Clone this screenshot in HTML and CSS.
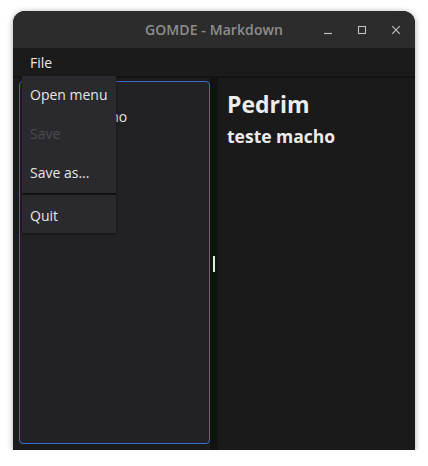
FILE: index.html
```html
<!DOCTYPE html>
<html>
<head>
<meta charset="utf-8">
<link rel="stylesheet" href="styles.css">
</head>
<body>
<div class="window">
  <header class="titlebar">
    <span class="spacer"></span>
    <span class="title">GOMDE - Markdown</span>
    <div class="controls">
      <span class="ctl"><svg width="10" height="10" viewBox="0 0 10 10"><path d="M1 8.5H9" stroke="#bdbdbd" stroke-width="1.2" fill="none"/></svg></span>
      <span class="ctl"><svg width="10" height="10" viewBox="0 0 10 10"><rect x="1.5" y="1.5" width="7" height="7" stroke="#bdbdbd" stroke-width="1.1" fill="none"/></svg></span>
      <span class="ctl"><svg width="10" height="10" viewBox="0 0 10 10"><path d="M1.2 1.2L8.8 8.8M8.8 1.2L1.2 8.8" stroke="#bdbdbd" stroke-width="1.2" fill="none"/></svg></span>
    </div>
  </header>
  <nav class="menubar"><span class="menu-item">File</span></nav>
  <div class="panes">
    <div class="editor-pane">
      <div class="editor">
        <div class="line"># Pedrim</div>
        <div class="line">## teste macho</div>
      </div>
    </div>
    <div class="handle"><span class="grip"></span></div>
    <div class="preview">
      <h1>Pedrim</h1>
      <h2>teste macho</h2>
    </div>
  </div>
  <div class="popup">
    <div class="pitem">Open menu</div>
    <div class="pitem disabled">Save</div>
    <div class="pitem">Save as...</div>
    <div class="sep"></div>
    <div class="pitem last">Quit</div>
  </div>
</div>
</body>
</html>
```
FILE: styles.css
```css
* { box-sizing: border-box; }
html, body { margin: 0; background: #ffffff; }
body {
  padding: 11px 13px 0 13px;
  font-family: "Open Sans", "Noto Sans", sans-serif;
}
.window {
  position: relative;
  width: 402px;
  height: 439px;
  border-radius: 12px 12px 0 0;
  background: #1a1a1a;
  box-shadow: 0 1px 6px rgba(0,0,0,0.35);
  display: flex;
  flex-direction: column;
}
.titlebar {
  height: 37px;
  flex: none;
  background: #2c2c2c;
  border-radius: 12px 12px 0 0;
  display: grid;
  grid-template-columns: 1fr auto 1fr;
  align-items: center;
}
.title {
  color: #8e8e8e;
  font-size: 14px;
  font-weight: 600;
  letter-spacing: 0.1px;
}
.controls {
  justify-self: end;
  display: flex;
  gap: 10px;
  padding-right: 7px;
}
.ctl {
  width: 24px;
  height: 24px;
  display: flex;
  align-items: center;
  justify-content: center;
}
.menubar {
  height: 30px;
  flex: none;
  background: #1b1b1b;
  border-bottom: 2px solid #131313;
  display: flex;
  align-items: center;
  padding-left: 17px;
}
.menu-item {
  color: #e8e8e8;
  font-size: 14px;
  line-height: 18px;
  padding-top: 1px;
}
.panes {
  flex: 1;
  display: flex;
  min-height: 0;
}
.editor-pane {
  width: 197px;
  flex: none;
  background: #1b1b1b;
  padding: 3px 0 6px 6px;
  display: flex;
}
.editor {
  flex: 1;
  border: 1px solid #3a6cd0;
  border-radius: 4px;
  background: #222225;
  padding: 0 5px;
  color: #e2e2e2;
  font-size: 14px;
  line-height: 23px;
}
.handle {
  width: 8px;
  flex: none;
  background: #121212;
  display: flex;
  align-items: center;
  justify-content: center;
  padding-bottom: 1px;
}
.grip {
  width: 2px;
  height: 16px;
  background: #e6e6e6;
}
.preview {
  flex: 1;
  background: #1a1a1a;
  padding: 10px 9px;
  color: #ececec;
}
.preview h1 {
  margin: 0;
  font-size: 23px;
  font-weight: 700;
  line-height: 32px;
}
.preview h2 {
  margin: 4px 0 0 0;
  font-size: 17.5px;
  font-weight: 700;
  line-height: 24px;
}
.popup {
  position: absolute;
  left: 9px;
  top: 65px;
  width: 94px;
  background: #2a2a2e;
  box-shadow: 0 1px 3px rgba(0,0,0,0.5);
  display: flex;
  flex-direction: column;
}
.pitem {
  height: 39px;
  padding-left: 8px;
  padding-bottom: 3px;
  display: flex;
  align-items: center;
  color: #e6e6e6;
  font-size: 14px;
}
.pitem.disabled { color: #4a4a4f; }
.pitem.last { height: 38px; padding-bottom: 0; padding-top: 2px; }
.sep {
  height: 2px;
  background: #121212;
}
```
